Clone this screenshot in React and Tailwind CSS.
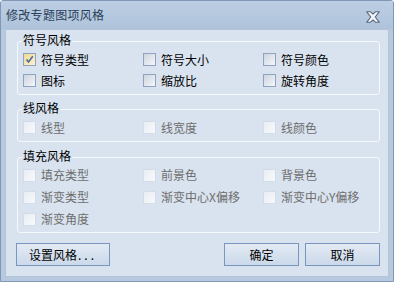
import React from "react";

function Box({ state }) {
  if (state === "disabled") {
    return (
      <span className="w-[13px] h-[13px] shrink-0 border border-[#d3dce7] bg-gradient-to-br from-[#e9eef4] to-[#f7f9fb]" />
    );
  }
  if (state === "checked") {
    return (
      <span className="relative w-[13px] h-[13px] shrink-0 border border-[#8ea3bf] bg-gradient-to-br from-[#f0d890] to-[#fdf3d3]">
        <svg viewBox="0 0 11 11" className="absolute left-0 top-0 w-[11px] h-[11px]">
          <path d="M2.5 5.5 L4.5 8 L8.8 2.2" fill="none" stroke="#4a6a9a" strokeWidth="1.6" />
        </svg>
      </span>
    );
  }
  return (
    <span className="w-[13px] h-[13px] shrink-0 border border-[#8ea3bf] bg-gradient-to-br from-[#cdd5df] to-[#f5f7fa]" />
  );
}

function Item({ label, state, tall }) {
  const disabled = state === "disabled";
  return (
    <div className={"flex items-center gap-[5px] " + (tall ? "h-[22px]" : "h-[21px]")}>
      <Box state={state} />
      <span className={disabled ? "text-[#6d6d6d]" : "text-black"}>{label}</span>
    </div>
  );
}

function Group({ title, items, className = "", tall = false }) {
  return (
    <div
      className={
        "relative border border-[#f5f8fc] rounded-[3px] pl-[5px] " +
        (tall ? "pt-[6px] pb-[2px] " : "pt-[7px] pb-[3px] ") +
        className
      }
    >
      <span className="absolute left-[4px] top-[-9px] px-[1px] bg-[#d9e3ef] leading-[14px] text-black">
        {title}
      </span>
      <div className="grid grid-cols-[120px_120px_120px]">
        {items.map((it, i) => (
          <Item key={i} label={it.label} state={it.state} tall={tall} />
        ))}
      </div>
    </div>
  );
}

function Btn({ children, className = "" }) {
  return (
    <div
      className={
        "h-[23px] border border-[#7897bf] bg-gradient-to-b from-[#e3eaf4] to-[#cbd9ea] flex items-center text-black " +
        className
      }
    >
      {children}
    </div>
  );
}

export default function App() {
  const d = "disabled";
  return (
    <div className="w-[394px] h-[282px] flex flex-col bg-[#b6c9df] border border-[#8098b5] rounded-t-[3px] text-[12px] leading-[14px] font-['SimSun','Noto_Sans_CJK_SC',sans-serif]">
      <div className="h-[28px] flex items-center justify-between pl-[5px] pr-[13px] bg-gradient-to-b from-[#bccee3] to-[#aec3db]">
        <span className="text-[12px] text-[#2a3f5a] tracking-[0.3px]">修改专题图项风格</span>
        <svg viewBox="0 0 14 12" className="w-[14px] h-[12px] mt-[3px]">
          <path
            d="M0.8 0.8 H4.6 L7 3.2 L9.4 0.8 H13.2 L9.2 6 L13.2 11.2 H9.4 L7 8.8 L4.6 11.2 H0.8 L4.8 6 Z"
            fill="#f4f6f9"
            stroke="#56677c"
            strokeWidth="1.1"
            strokeLinejoin="round"
          />
        </svg>
      </div>
      <div className="flex-1 mx-[4px] mb-[4px] bg-[#d9e3ef] border border-[#b3c4d9] pl-[11px] pr-[8px] pt-[11px] flex flex-col">
        <Group
          title="符号风格"
          items={[
            { label: "符号类型", state: "checked" },
            { label: "符号大小", state: "on" },
            { label: "符号颜色", state: "on" },
            { label: "图标", state: "on" },
            { label: "缩放比", state: "on" },
            { label: "旋转角度", state: "on" },
          ]}
        />
        <Group
          title="线风格"
          className="mt-[14px]"
          items={[
            { label: "线型", state: d },
            { label: "线宽度", state: d },
            { label: "线颜色", state: d },
          ]}
        />
        <Group
          title="填充风格"
          className="mt-[15px]"
          tall
          items={[
            { label: "填充类型", state: d },
            { label: "前景色", state: d },
            { label: "背景色", state: d },
            { label: "渐变类型", state: d },
            { label: "渐变中心X偏移", state: d },
            { label: "渐变中心Y偏移", state: d },
            { label: "渐变角度", state: d },
          ]}
        />
        <div className="flex mt-[10px] ml-[-1px]">
          <Btn className="w-[94px] pl-[12px]">
            设置风格<span className="tracking-[3px] ml-[1px]">...</span>
          </Btn>
          <div className="flex-1" />
          <Btn className="w-[75px] justify-center">确定</Btn>
          <Btn className="w-[75px] justify-center ml-[6px]">取消</Btn>
        </div>
      </div>
    </div>
  );
}
